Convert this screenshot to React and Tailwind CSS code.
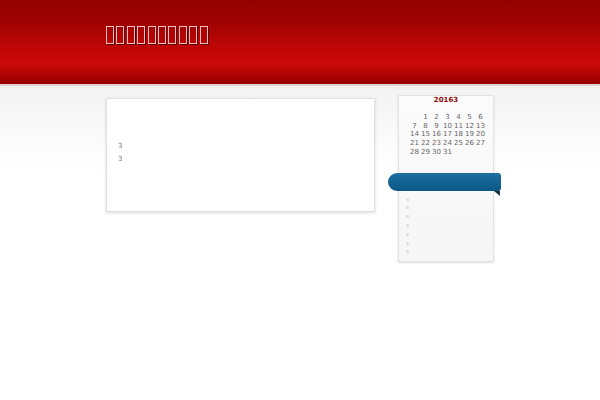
import React from "react";

const weeks = [
  ["", "1", "2", "3", "4", "5", "6"],
  ["7", "8", "9", "10", "11", "12", "13"],
  ["14", "15", "16", "17", "18", "19", "20"],
  ["21", "22", "23", "24", "25", "26", "27"],
  ["28", "29", "30", "31", "", "", ""],
];

export default function App() {
  return (
    <div className="min-h-[400px] w-[600px] bg-[linear-gradient(to_bottom,#eaeaea_0px,#f0f0f0_70px,#f8f8f8_120px,#fefefe_160px,#ffffff_180px)] font-['DejaVu_Sans',sans-serif]">
      <div className="h-[84px] bg-[linear-gradient(to_bottom,#930000_0%,#a00202_25%,#bd0606_55%,#cb0a0a_75%,#c40808_80%,#a80202_92%,#980000_100%)]">
        <div className="mx-auto w-[388px] pt-[26px]">
          <h1 className="flex gap-[2.4px]" aria-label="title">
            {Array.from({ length: 10 }).map((_, i) => (
              <span
                key={i}
                className="block h-[18px] w-[8px] border-[1.5px] border-[#f2c0c0] shadow-[1px_1px_0_#5a0000]"
              />
            ))}
          </h1>
        </div>
      </div>
      <div className="h-[2px] bg-[#e2d2d2]" />
      <div className="mx-auto flex w-[388px] items-start gap-[23px]">
        <div className="mt-[12px] h-[114px] w-[269px] border border-[#e0e0e0] bg-white pl-[11px] pt-[41px] text-[7px] leading-[13px] text-[#777] shadow-[0_1px_3px_rgba(0,0,0,0.15)]">
          <p>3</p>
          <p>3</p>
        </div>
        <div className="mt-[9px] h-[167px] w-[96px] border border-[#e2e2e2] bg-[linear-gradient(to_bottom,#fbfbfb,#f6f6f6)] shadow-[0_1px_2px_rgba(0,0,0,0.12)]">
          <div className="text-center text-[7px] font-bold leading-[8px] text-[#8e0b0b]">20163</div>
          <div className="ml-[10px] mt-[9px] grid w-[77px] grid-cols-7 text-center text-[7px] leading-[8.7px] text-[#666]">
            {weeks.flat().map((d, i) => (
              <span key={i}>{d}</span>
            ))}
          </div>
          <div className="relative ml-[-11px] mr-[-8px] mt-[16px] h-[18px] rounded-l-[9px] rounded-r-[3px] bg-[linear-gradient(to_bottom,#1d70a0,#0b5784)]">
            <span className="absolute right-[1px] top-[18px] h-0 w-0 border-l-[6px] border-t-[5px] border-l-transparent border-t-[#1c2f3c]" />
          </div>
          <ul className="ml-[7px] mt-[7px] flex flex-col gap-[5.8px]">
            {Array.from({ length: 7 }).map((_, i) => (
              <li key={i} className="h-[3px] w-[3px] rounded-full bg-[#dcdcdc]" />
            ))}
          </ul>
        </div>
      </div>
    </div>
  );
}
